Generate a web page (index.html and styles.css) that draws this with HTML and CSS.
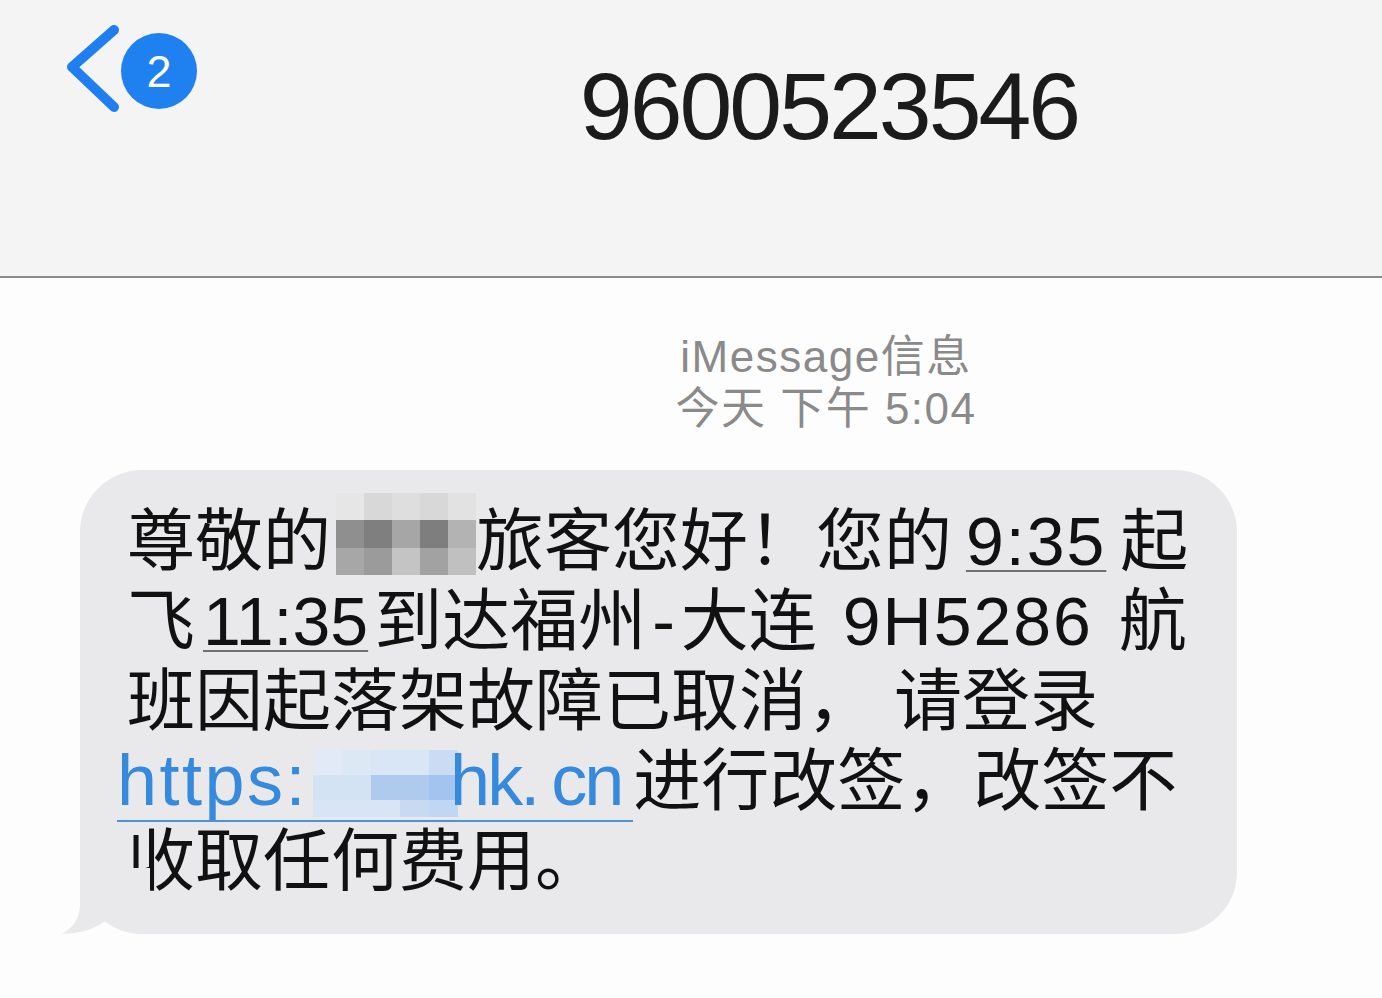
FILE: index.html
```html
<!DOCTYPE html>
<html lang="zh-CN">
<head>
<meta charset="utf-8">
<title>9600523546</title>
<link rel="stylesheet" href="styles.css">
</head>
<body>
<header class="nav">
  <div class="back">
    <svg class="chev" width="56" height="92" viewBox="0 0 56 92" aria-hidden="true">
      <polyline points="50,8 8,45 50,85" fill="none" stroke="#1f7ff0" stroke-width="10" stroke-linecap="round" stroke-linejoin="round"/>
    </svg>
    <span class="badge">2</span>
  </div>
  <h1 class="title">9600523546</h1>
</header>
<main class="thread">
  <div class="meta">
    <div>iMessage信息</div>
    <div>今天 下午 5:04</div>
  </div>
  <div class="bubble">
    <div class="line l1">尊敬的<span class="pix"><i class="a1"></i><i class="a2"></i><i class="a3"></i><i class="a2"></i><i class="a5"></i><i class="b1"></i><i class="b2"></i><i class="b3"></i><i class="b4"></i><i class="b5"></i><i class="c1"></i><i class="c2"></i><i class="c3"></i><i class="c4"></i><i class="c5"></i></span>旅客您好！您的 <span class="time num">9:35</span> 起</div>
    <div class="line l2">飞<span class="time t2">11:35</span>到达福州<span class="dash">-</span>大连 <span class="num">9H5286</span> 航</div>
    <div class="line">班因起落架故障已取消， 请登录</div>
    <div class="line"><span class="link"><span class="proto">https:</span><span class="pix2"><i class="d1"></i><i class="d2"></i><i class="d3"></i><i class="d3"></i><i class="d5"></i><i class="e1"></i><i class="e1"></i><i class="e3"></i><i class="e3"></i><i class="e5"></i><i class="f1"></i><i class="f1"></i><i class="f1"></i><i class="f4"></i><i class="f5"></i></span><span class="host">hk. cn</span> </span>进行改签，改签不</div>
    <div class="line">收取任何费用。</div>
    <svg class="tail" width="100" height="70" viewBox="0 0 100 70" aria-hidden="true">
      <path d="M20 4 L20 40 Q20 60 2 70 Q30 69 45 57 Q60 67 90 70 L90 4 Z" fill="#e9e9eb"/>
    </svg>
  </div>
</main>
</body>
</html>
```
FILE: styles.css
```css
html, body {
  margin: 0;
  padding: 0;
  background: #fdfdfd;
}
body {
  width: 1382px;
  height: 998px;
  overflow: hidden;
  font-family: "Liberation Sans", "Noto Sans CJK SC", sans-serif;
}

/* header */
.nav {
  box-sizing: border-box;
  height: 278px;
  background: #f4f4f4;
  border-bottom: 2px solid #8c8c8c;
  display: flex;
  align-items: flex-start;
  padding: 22px 0 0 64px;
}
.back {
  display: flex;
  align-items: flex-start;
  width: 133px;
  gap: 1px;
}
.chev { display: block; flex: none; }
.badge {
  flex: none;
  width: 76px;
  height: 76px;
  margin-top: 11px;
  border-radius: 50%;
  background: #1f80f0;
  color: #fff;
  display: flex;
  align-items: center;
  justify-content: center;
  font: 400 45px/1 "Liberation Sans", sans-serif;
}
.title {
  flex: 1;
  margin: 37px 0 0 79px;
  text-align: center;
  font: 400 95px/1 "Liberation Sans", sans-serif;
  letter-spacing: -3px;
  color: #1b1b1b;
}

/* thread */
.thread {
  padding-top: 53px;
}
.meta {
  padding-left: 270px;
  text-align: center;
  font: 400 44px/52px "Liberation Sans", "Noto Sans CJK SC", sans-serif;
  letter-spacing: 1.5px;
  color: #8a8a8a;
}
.bubble {
  position: relative;
  box-sizing: border-box;
  width: 1157px;
  margin: 35px 0 0 80px;
  padding: 31px 40px 33px 47px;
  background: #e9e9eb;
  border-radius: 62px;
  font: 400 68px/80px "Liberation Sans", "Noto Sans CJK SC", sans-serif;
  color: #111;
  white-space: nowrap;
}
.line { height: 80px; }
.l1 { word-spacing: -5px; }
.l2 { word-spacing: 7px; }
.num { letter-spacing: 2px; }
.time {
  text-decoration: underline;
  text-decoration-color: #707070;
  text-decoration-thickness: 2px;
  text-underline-offset: 5px;
}
.t2 { margin: 0 6px 0 8px; }
.dash { margin: 0 6px; }

.pix {
  display: inline-grid;
  grid-template-columns: repeat(5, 1fr);
  grid-template-rows: repeat(3, 1fr);
  width: 140px;
  height: 82px;
  vertical-align: top;
  margin: -8px 0 0 5px;
}
.pix i, .pix2 i { display: block; }
.a1 { background: #e6e6e6; }
.a2 { background: #d8d8d8; }
.a3 { background: #dedede; }
.a5 { background: #e2e2e2; }
.b1 { background: #8f8f8f; }
.b2 { background: #7f7f7f; }
.b3 { background: #a6a6a6; }
.b4 { background: #7e7e7e; }
.b5 { background: #b3b3b3; }
.c1 { background: #a7a7a7; }
.c2 { background: #9b9b9b; }
.c3 { background: #c4c4c4; }
.c4 { background: #a2a2a2; }
.c5 { background: #c0c0c0; }

.link {
  margin-left: -10px;
  font-size: 72px;
  line-height: 1;
  word-spacing: -8px;
  color: #368ade;
  border-bottom: 2px solid #4a93e2;
}
.proto { letter-spacing: 2.5px; }
.host { letter-spacing: -3px; word-spacing: -3px; }
.pix2 {
  display: inline-grid;
  grid-template-columns: repeat(5, 1fr);
  grid-template-rows: 25px 25px 17px;
  width: 145px;
  height: 67px;
  vertical-align: top;
  margin: 9px -8px 0 5px;
}
.d1 { background: #e1eaf6; }
.d2 { background: #dde8f5; }
.d3 { background: #d9e6f5; }
.d5 { background: #c9dcf3; }
.e1 { background: #d4e3f4; }
.e3 { background: #aecbee; }
.e5 { background: #a3c4ee; }
.f1 { background: #d8e5f5; }
.f4 { background: #c7daf2; }
.f5 { background: #c0d6f2; }

.tail {
  position: absolute;
  left: -20px;
  bottom: 0;
  display: block;
}
```
